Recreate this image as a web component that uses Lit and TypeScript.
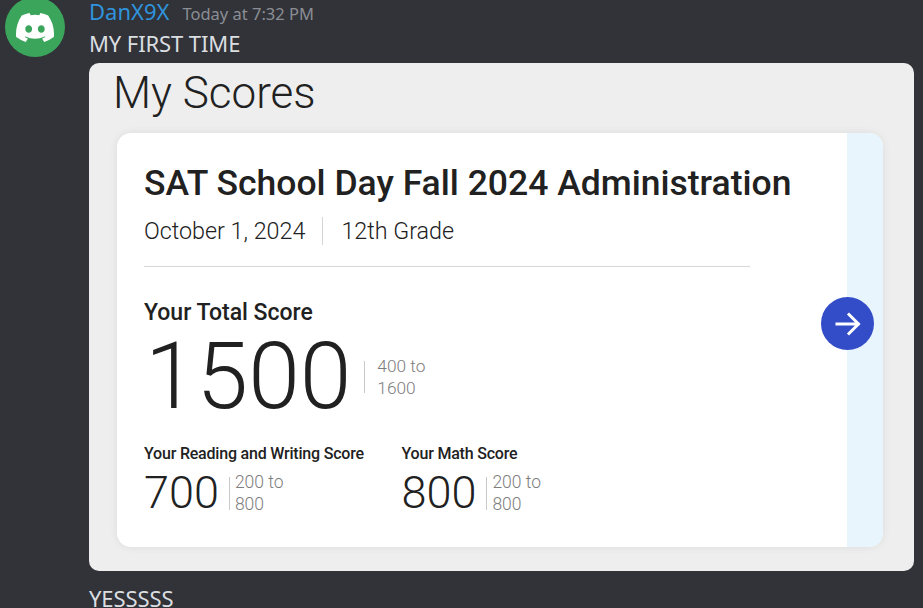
import { LitElement, html, css } from "lit";
import { customElement } from "lit/decorators.js";

@customElement("app-root")
export class AppRoot extends LitElement {
  static styles = css`
    :host { display: block; width: 923px; height: 608px; overflow: hidden; background: #313338; font-family: "Noto Sans", sans-serif; }
    .msg { display: flex; padding-left: 5px; }
    .avatar { width: 60px; height: 60px; margin-top: -3px; border-radius: 50%; background: #3ba55c; display: flex; align-items: center; justify-content: center; flex: none; }
    .avatar svg { width: 38px; height: 29px; fill: #fff; }
    .body { margin-left: 24px; width: 825px; }
    .head { display: flex; align-items: baseline; gap: 13px; height: 24px; line-height: 22px; }
    .name { font-size: 22px; color: #2f93dd; }
    .time { font-size: 16.5px; color: #8b8e95; }
    .text { font-size: 22px; color: #dbdee1; line-height: 30px; margin-top: 4px; letter-spacing: -0.1px; }
    .shot { margin-top: 5px; height: 508px; box-sizing: border-box; width: 825px; background: #eeeeee; border-radius: 10px; padding: 0 31px 24px 28px; font-family: Roboto, sans-serif; color: #212121; }
    h1 { margin: 0; font-size: 44px; font-weight: 300; height: 70px; line-height: 60px; margin-left: -4px; }
    .card { position: relative; display: flex; height: 414px; background: #fff; border-radius: 14px; box-shadow: 0 0 8px rgba(0,0,0,.08); }
    .main { flex: none; width: 730px; box-sizing: border-box; padding: 28px 0 0 27px; }
    .strip { flex: 1; background: #e9f5fc; border-radius: 0 14px 14px 0; }
    h2 { margin: 0; font-size: 35.5px; font-weight: 500; line-height: 44px; }
    .meta { display: flex; align-items: center; font-size: 23.3px; font-weight: 300; height: 30px; margin-top: 11px; width: 605px; }
    .meta .sep { width: 1px; height: 28px; background: #d4d4d4; margin: 0 18px 0 17px; }
    .rule { width: 606px; height: 1px; background: #d8d8d8; margin-top: 20px; }
    .label { font-size: 23px; font-weight: 500; line-height: 28px; margin-top: 32px; }
    .score { display: flex; align-items: center; }
    .big { font-size: 93px; font-weight: 300; line-height: 100px; margin-left: 1px; }
    .score .bar { width: 1px; background: #c9c9c9; }
    .big + .bar { height: 32px; margin: 0 12px 0 13px; }
    .range { font-weight: 300; color: #7d7d7d; }
    .range.lg { font-size: 17.3px; line-height: 22px; }
    .subs { display: flex; margin-top: 16px; }
    .sub { width: 257.5px; }
    .sub-label { font-size: 16px; font-weight: 500; line-height: 22px; letter-spacing: -0.2px; }
    .mid { font-size: 45px; font-weight: 300; line-height: 56px; }
    .mid + .bar { height: 33px; margin: 0 5px 0 10px; }
    .range.sm { font-size: 17.5px; line-height: 22px; }
    .btn { position: absolute; left: 704px; top: 164px; width: 53px; height: 53px; border-radius: 50%; background: #324dc7; display: flex; align-items: center; justify-content: center; }
    .btn svg { width: 28px; height: 28px; fill: none; stroke: #fff; stroke-width: 3; stroke-linecap: square; }
    .after { font-size: 22px; color: #dbdee1; line-height: 30px; margin-top: 12px; letter-spacing: -0.1px; }
  `;

  private sub(label: string, value: string) {
    return html`<div class="sub">
      <div class="sub-label">${label}</div>
      <div class="score">
        <div class="mid">${value}</div><div class="bar"></div>
        <div class="range sm">200 to<br />800</div>
      </div>
    </div>`;
  }

  render() {
    return html`<div class="msg">
      <div class="avatar">
        <svg viewBox="0 0 127.14 96.36"><path d="M107.7 8.07A105.15 105.15 0 0 0 81.47 0a72.06 72.06 0 0 0-3.36 6.83 97.68 97.68 0 0 0-29.11 0A72.37 72.37 0 0 0 45.64 0a105.89 105.89 0 0 0-26.25 8.09C2.79 32.65-1.71 56.6.54 80.21a105.73 105.73 0 0 0 32.17 16.15 77.7 77.7 0 0 0 6.89-11.11 68.42 68.42 0 0 1-10.85-5.18c.91-.66 1.8-1.34 2.66-2a75.57 75.57 0 0 0 64.32 0c.87.71 1.76 1.39 2.66 2a68.68 68.68 0 0 1-10.87 5.19 77 77 0 0 0 6.89 11.1 105.25 105.25 0 0 0 32.19-16.14c2.64-27.38-4.51-51.11-18.9-72.15ZM42.45 65.69C36.18 65.69 31 60 31 53s5-12.74 11.43-12.74S54 46 53.89 53s-5.05 12.69-11.44 12.69Zm42.24 0C78.41 65.69 73.25 60 73.25 53s5-12.74 11.44-12.74S96.23 46 96.12 53s-5.04 12.69-11.43 12.69Z" /></svg>
      </div>
      <div class="body">
        <div class="head"><span class="name">DanX9X</span><span class="time">Today at 7:32 PM</span></div>
        <div class="text">MY FIRST TIME</div>
        <div class="shot">
          <h1>My Scores</h1>
          <div class="card">
            <div class="main">
              <h2>SAT School Day Fall 2024 Administration</h2>
              <div class="meta"><span>October 1, 2024</span><span class="sep"></span><span>12th Grade</span></div>
              <div class="rule"></div>
              <div class="label">Your Total Score</div>
              <div class="score">
                <div class="big">1500</div><div class="bar"></div>
                <div class="range lg">400 to<br />1600</div>
              </div>
              <div class="subs">
                ${this.sub("Your Reading and Writing Score", "700")}
                ${this.sub("Your Math Score", "800")}
              </div>
            </div>
            <div class="strip"></div>
            <div class="btn"><svg viewBox="0 0 28 28"><path d="M3 14H24M15 4.5L24.5 14L15 23.5" /></svg></div>
          </div>
        </div>
        <div class="after">YESSSSS</div>
      </div>
    </div>`;
  }
}
